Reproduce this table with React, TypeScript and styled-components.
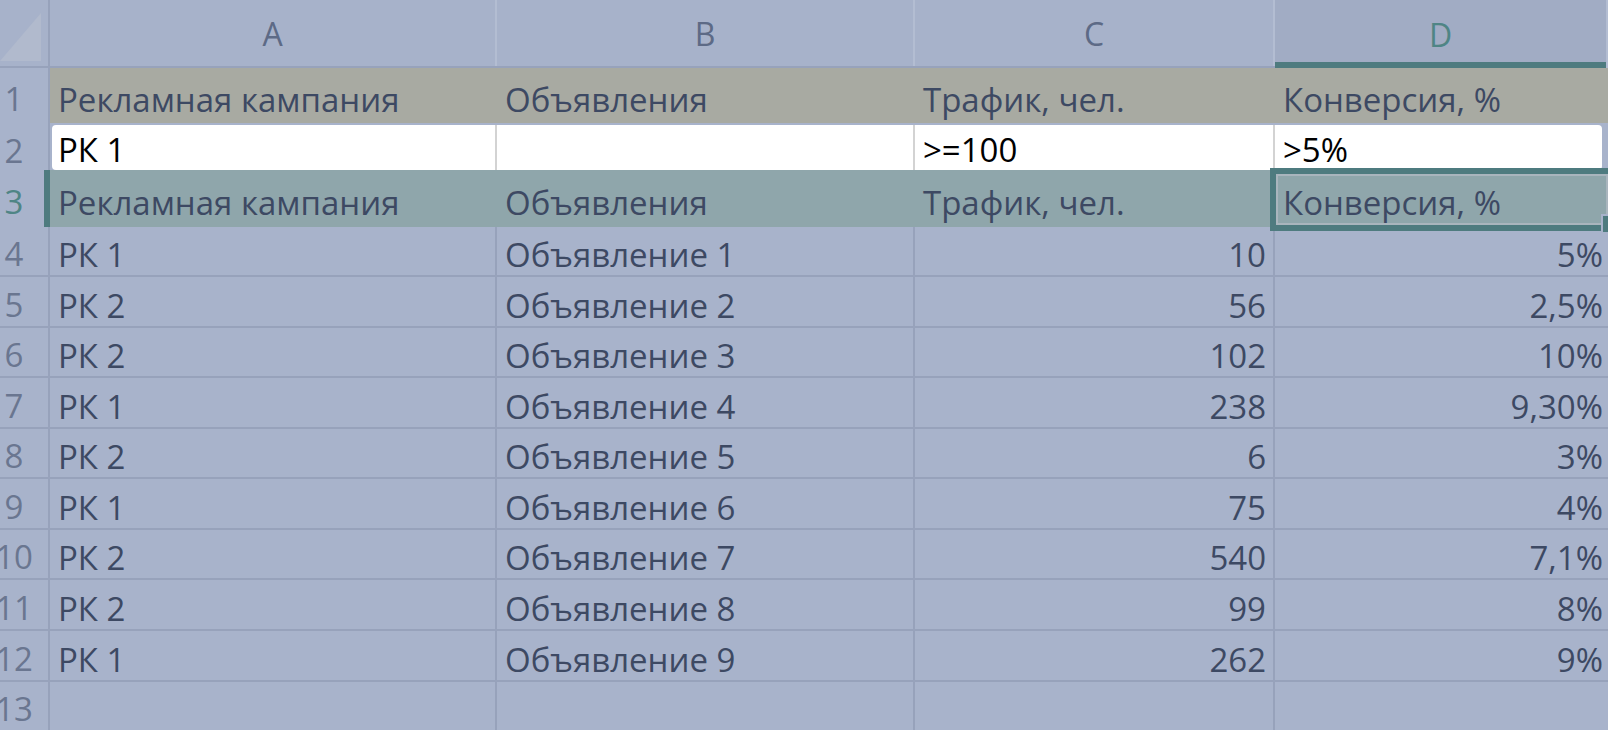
import React from "react";
import styled, { createGlobalStyle } from "styled-components";

const GlobalStyle = createGlobalStyle`
  html, body {
    margin: 0;
    padding: 0;
    background: #a8b3cb;
    overflow: hidden;
  }
  body {
    font-family: "Open Sans", "Noto Sans", sans-serif;
  }
`;

const COLS = "50px 447px 418px 360px 1fr";

const C = {
  bg: "#a8b3cb",
  head: "#a7b2ca",
  headSel: "#a1acc4",
  line: "#97a2bb",
  headLine: "#b3bdd2",
  text: "#3d4963",
  headText: "#5d6a86",
  rowNum: "#6a7690",
  khaki: "#a8aaa2",
  tealFill: "#8fa6ab",
  teal: "#4e7b7f",
  tealText: "#4f8585",
  sep: "#d3d3d3",
};

const Sheet = styled.div`
  position: relative;
  width: 1608px;
  height: 730px;
  overflow: hidden;
  display: flex;
  flex-direction: column;
  font-size: 33px;
  line-height: 1.2;
  color: ${C.text};
`;

const HeaderRow = styled.div`
  display: grid;
  grid-template-columns: ${COLS};
  height: 68px;
  flex: none;
  background: ${C.head};
  border-bottom: 2px solid ${C.line};
  box-sizing: border-box;
`;

const Corner = styled.div`
  position: relative;
  border-right: 2px solid ${C.line};
  svg {
    position: absolute;
    left: 0;
    top: 13px;
  }
`;

const ColHead = styled.div<{ $sel?: boolean }>`
  display: flex;
  align-items: center;
  justify-content: center;
  padding-top: 3px;
  border-right: 2px solid ${C.headLine};
  background: ${(p) => (p.$sel ? C.headSel : "transparent")};
  color: ${(p) => (p.$sel ? C.tealText : C.headText)};
  font-size: 32px;
  box-sizing: border-box;
  ${(p) => (p.$sel ? `box-shadow: inset 0 -6px 0 ${C.teal}; margin-bottom: -2px;` : "")}
`;

type Kind = "plain" | "khaki" | "white" | "teal";

const Row = styled.div<{ $h: number; $kind: Kind }>`
  display: grid;
  grid-template-columns: ${COLS};
  height: ${(p) => p.$h}px;
  flex: none;
  box-sizing: border-box;
  border-bottom: ${(p) => (p.$kind === "plain" ? `2px solid ${C.line}` : "none")};
`;

const RowHead = styled.div<{ $sel?: boolean }>`
  display: flex;
  align-items: center;
  justify-content: center;
  padding-right: 20px;
  padding-top: 6px;
  box-sizing: border-box;
  border-right: 2px solid ${(p) => (p.$sel ? C.teal : C.line)};
  ${(p) => (p.$sel ? `box-shadow: inset -4px 0 0 ${C.teal};` : "")}
  color: ${(p) => (p.$sel ? C.tealText : C.rowNum)};
  font-size: 33px;
  white-space: nowrap;
`;

const fillOf = (k: Kind) =>
  k === "khaki" ? C.khaki : k === "teal" ? C.tealFill : k === "white" ? "#ffffff" : "transparent";

const Cell = styled.div<{ $kind: Kind; $right?: boolean; $first?: boolean; $last?: boolean }>`
  display: flex;
  align-items: center;
  justify-content: ${(p) => (p.$right ? "flex-end" : "flex-start")};
  padding: 8px ${(p) => (p.$right ? (p.$last ? "5px" : "7px") : "0")} 0 ${(p) => (p.$right ? "0" : "8px")};
  box-sizing: border-box;
  white-space: nowrap;
  background: ${(p) => fillOf(p.$kind)};
  border-right: 2px solid
    ${(p) =>
      p.$kind === "white" ? C.sep : p.$kind === "plain" ? C.line : "transparent"};
  ${(p) =>
    p.$kind === "white"
      ? `
    margin: 2px 0 3px 0;
    padding-top: 5px;
    color: #000;
    ${p.$first ? "margin-left: 2px; padding-left: 6px; border-top-left-radius: 4px; border-bottom-left-radius: 4px;" : ""}
    ${p.$last ? "margin-right: 6px; border-right: none; border-top-right-radius: 4px; border-bottom-right-radius: 4px;" : ""}
  `
      : ""}
  ${(p) => (p.$last && p.$kind !== "white" ? "border-right: none;" : "")}
`;

const Selection = styled.div`
  position: absolute;
  left: 1270px;
  top: 168px;
  width: 344px;
  height: 63px;
  box-sizing: border-box;
  border: 6px solid ${C.teal};
  box-shadow: inset 0 0 0 2px #a9b5bd;
  pointer-events: none;
`;

const Handle = styled.div`
  position: absolute;
  left: 1603px;
  top: 216px;
  width: 10px;
  height: 16px;
  background: ${C.teal};
  box-shadow: 0 0 0 2px ${C.bg};
`;

type Data = [string, string, string, string];

const rows: Data[] = [
  ["РК 1", "Объявление 1", "10", "5%"],
  ["РК 2", "Объявление 2", "56", "2,5%"],
  ["РК 2", "Объявление 3", "102", "10%"],
  ["РК 1", "Объявление 4", "238", "9,30%"],
  ["РК 2", "Объявление 5", "6", "3%"],
  ["РК 1", "Объявление 6", "75", "4%"],
  ["РК 2", "Объявление 7", "540", "7,1%"],
  ["РК 2", "Объявление 8", "99", "8%"],
  ["РК 1", "Объявление 9", "262", "9%"],
];
const heights = [50, 51, 50, 51, 50, 51, 50, 51, 51];

const headers: Data = ["Рекламная кампания", "Объявления", "Трафик, чел.", "Конверсия, %"];

function DataRow({ n, h, kind, data, right, sel }: { n: number; h: number; kind: Kind; data: Data; right?: boolean; sel?: boolean }) {
  return (
    <Row $h={h} $kind={kind}>
      <RowHead $sel={sel}>{n}</RowHead>
      <Cell $kind={kind} $first>{data[0]}</Cell>
      <Cell $kind={kind}>{data[1]}</Cell>
      <Cell $kind={kind} $right={right}>{data[2]}</Cell>
      <Cell $kind={kind} $right={right} $last>{data[3]}</Cell>
    </Row>
  );
}

export default function App() {
  return (
    <>
      <GlobalStyle />
      <Sheet>
        <HeaderRow>
          <Corner>
            <svg width="41" height="48" viewBox="0 0 41 48">
              <polygon points="41,0 41,48 0,48" fill="#b1bacd" />
            </svg>
          </Corner>
          <ColHead>A</ColHead>
          <ColHead>B</ColHead>
          <ColHead>C</ColHead>
          <ColHead $sel>D</ColHead>
        </HeaderRow>
        <DataRow n={1} h={55} kind="khaki" data={headers} />
        <DataRow n={2} h={47} kind="white" data={["РК 1", "", ">=100", ">5%"]} />
        <DataRow n={3} h={57} kind="teal" data={headers} sel />
        {rows.map((r, i) => (
          <DataRow key={i} n={i + 4} h={heights[i]} kind="plain" data={r} right />
        ))}
        <DataRow n={13} h={50} kind="plain" data={["", "", "", ""]} right />
        <Selection />
        <Handle />
      </Sheet>
    </>
  );
}
